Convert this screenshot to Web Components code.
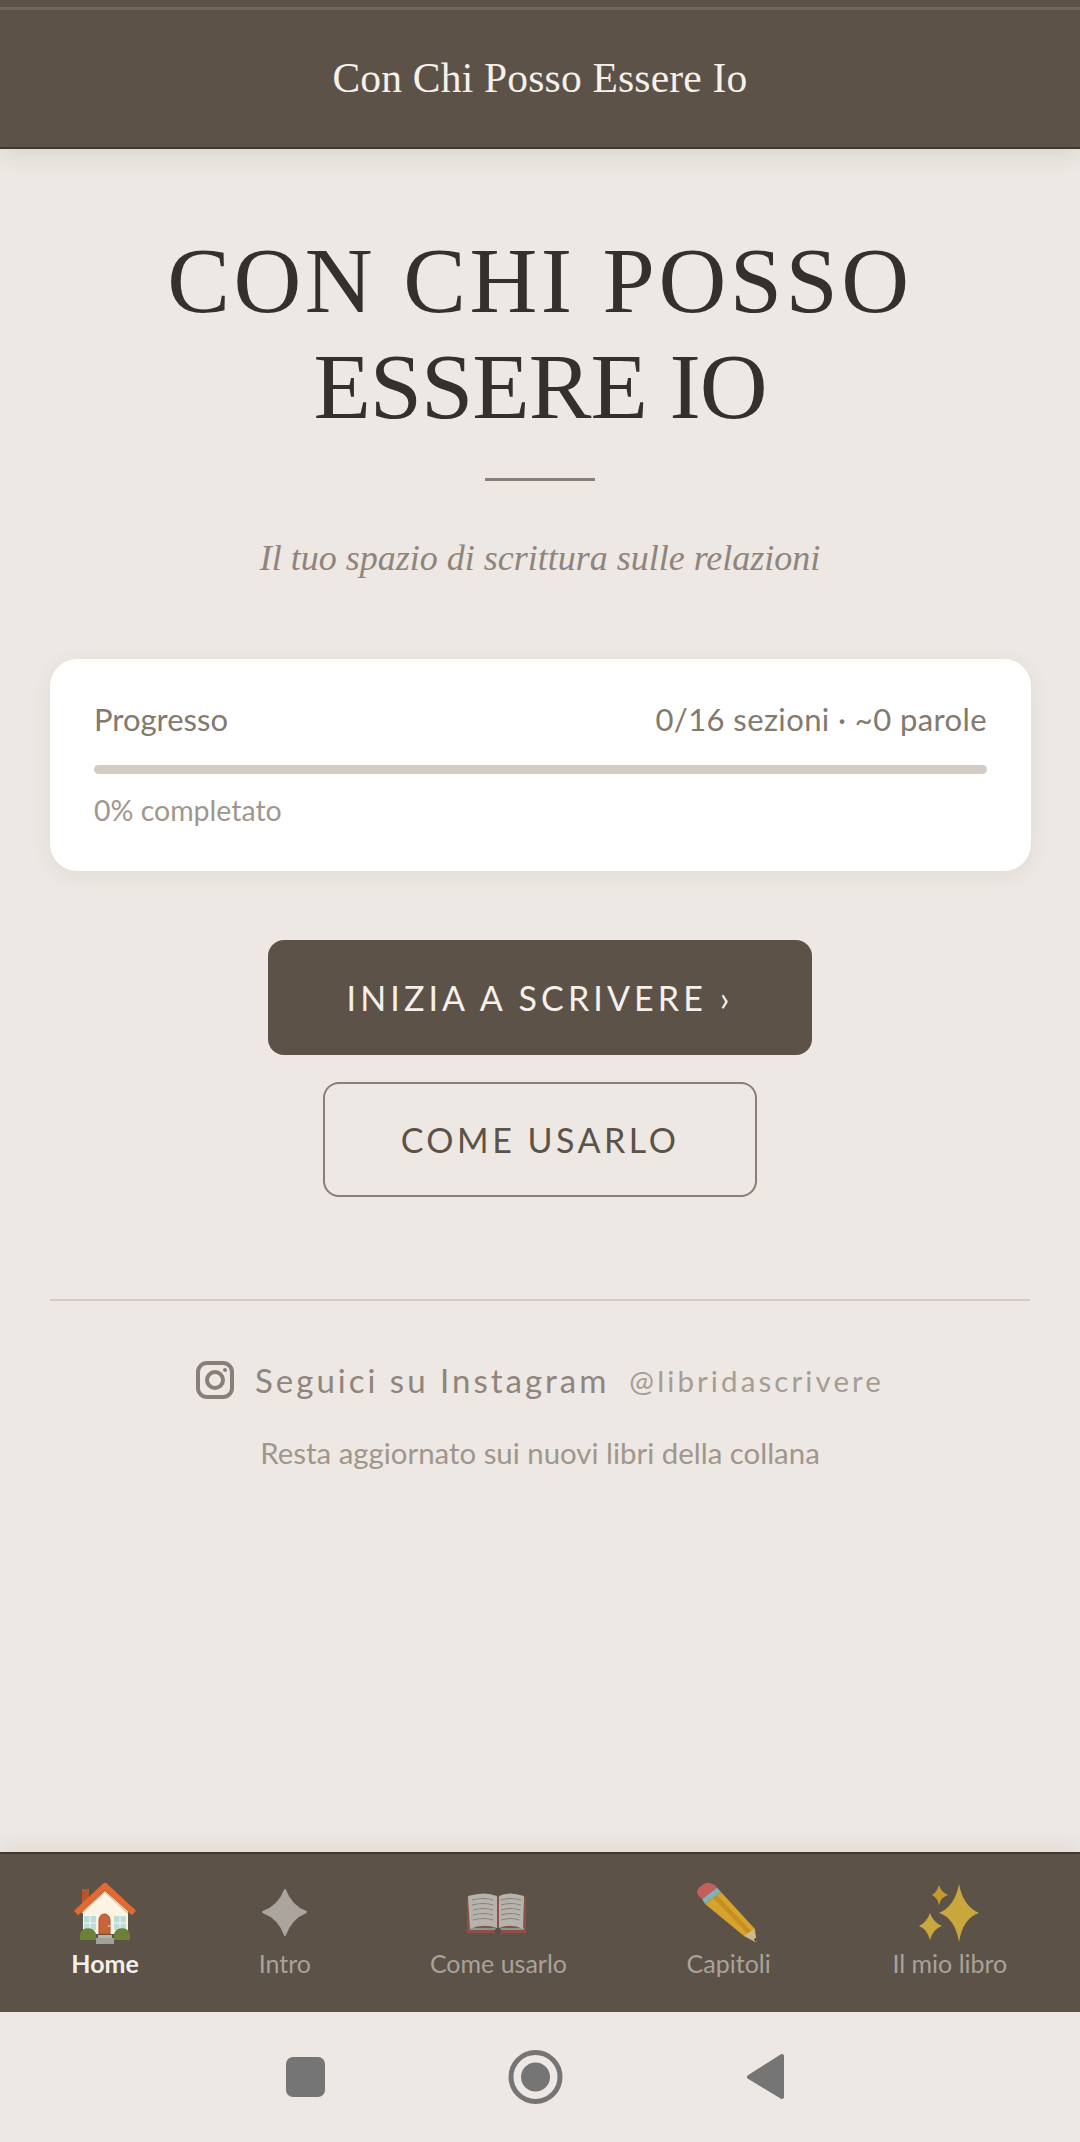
<html>
<head>
<style>
    html, body{
        margin: 0;
        padding: 0;
        background: #ede8e3;
    }
</style>
</head>
<body>
    <app-page>
        <app-header>Con Chi Posso Essere Io</app-header>
        <hero-title>
            <span slot="titolo" style="letter-spacing:3.500px">CON CHI POSSO</span>
            <span slot="titolo" style="letter-spacing:-1px;display:block">ESSERE IO</span>
            <span slot="sottotitolo">Il tuo spazio di scrittura sulle relazioni</span>
        </hero-title>
        <progress-card></progress-card>
        <action-button class="first" variant="solid">INIZIA A SCRIVERE ›</action-button>
        <action-button variant="outline">COME USARLO</action-button>
        <social-follow></social-follow>
        <bottom-nav slot="nav">
            <nav-item icon="home" active w="66">Home</nav-item>
            <nav-item icon="star" w="49">Intro</nav-item>
            <nav-item icon="book" w="134">Come usarlo</nav-item>
            <nav-item icon="pencil" w="82">Capitoli</nav-item>
            <nav-item icon="sparkles" w="116">Il mio libro</nav-item>
        </bottom-nav>
        <system-bar slot="nav"></system-bar>
    </app-page>
<script>
    const SANS = `Lato, "Open Sans", sans-serif`;
    const SERIF = `"Liberation Serif", serif`;

    const ICONS = {
        home: `
            <rect x="22" y="17" width="7" height="20" fill="#b5562c"/>
            <path d="M23 62V39L45 19l23 20v23z" fill="#fdf3e3"/>
            <path d="M16 41L45 14l29 27" fill="none" stroke="#e2692f" stroke-width="6" stroke-linejoin="round"/>
            <path d="M22 41L45 20l23 21" fill="none" stroke="#d9c4a8" stroke-width="1.500"/>
            <rect x="24" y="44" width="12" height="14" fill="#b9dcdc"/>
            <rect x="54" y="44" width="12" height="14" fill="#b9dcdc"/>
            <path d="M30 44v14M24 51h12M60 44v14M54 51h12" stroke="#fdf3e3" stroke-width="1"/>
            <path d="M39 62V48a5.500 6 0 0 1 11 0v14z" fill="#c8643a" stroke="#a34d2a" stroke-width="1"/>
            <circle cx="49" cy="54" r="1" fill="#f2d060"/>
            <path d="M20 68v-4a6 5 0 0 1 16-2v6zM54 68v-6a6 5 0 0 1 16 2v4z" fill="#6d8038"/>
            <rect x="38" y="63" width="14" height="3" fill="#b5b3ad"/>
            <rect x="36" y="66" width="18" height="6" fill="#a3a19b"/>`,
        star: `<path d="M45 18Q51 34 66 40Q51 46 45 63Q39 46 23 40Q39 34 45 18z" fill="#aba59d" stroke="#aba59d" stroke-width="2" stroke-linejoin="round"/>`,
        book: `
            <path d="M14 25V61H40L43 63H47L50 61H73V25z" fill="#8f4f45"/>
            <path d="M16 58H42L45 62L48 58H71V56H19z" fill="#7d9a96"/>
            <path d="M15 24Q32 19 44 24V56Q30 51 17 57z" fill="#b6b3ad"/>
            <path d="M71 24Q56 19 46 24V56Q58 51 70 57z" fill="#b6b3ad"/>
            <path d="M19 28q12-3 21 0M19 33q12-3 21 0M20 38q11-3 20 0M20 43q11-3 20 0M20 48q11-3 20 0M48 28q10-3 20 0M48 33q10-3 20 0M48 38q10-3 19 0M48 43q10-3 19 0M48 48q10-3 18 0" fill="none" stroke="#85817a" stroke-width="1.200"/>
            <path d="M41 60L43 56H47L49 60L45 64z" fill="#55504a"/>`,
        pencil: `
            <path d="M21 32L37 20L71 57L72 66L60 64z" fill="#d6a32c"/>
            <path d="M29 26L33 23L68 60L64 62z" fill="#c4901f"/>
            <path d="M60 64L70 57L73 71z" fill="#cdb98a"/>
            <path d="M70 67L73 73L72 66z" fill="#4a4540"/>
            <path d="M21 32L37 20L33 15.500L18 27z" fill="#85b0b4"/>
            <path d="M18 27L33 15.500Q28 10 22 11Q13 15 13 21Q14 24 18 27z" fill="#c4605c"/>`,
        sparkles: `
            <path d="M54 12Q58 34 74 41Q58 46 54 70Q50 46 34 41Q50 34 54 12z" fill="#c8a73c"/>
            <path d="M34 13Q36 20 43 23Q36 25 34 33Q32 25 27 23Q32 20 34 13z" fill="#c49a2a"/>
            <path d="M25 41Q28 50 37 54Q28 57 25 68Q22 57 14 54Q22 50 25 41z" fill="#c8a73c"/>`
    };

    class BaseElement extends HTMLElement{
        constructor(){
            super();
            this.attachShadow({mode: 'open'});
        }
        connectedCallback(){
            const template = document.createElement('template');
            template.innerHTML = `<style>${this.getStyles()}</style>${this.getMarkup()}`;
            this.shadowRoot.appendChild(template.content.cloneNode(true));
        }
    }

    class AppPage extends BaseElement{
        getStyles(){
            return `
            :host{ display: flex; flex-direction: column; height: 2142px; width: 1080px; background: #ede8e3; overflow: hidden; }
            main{ flex: 1; display: flex; flex-direction: column; align-items: stretch; padding: 0 50px; min-height: 0; }
            `;
        }
        getMarkup(){
            return `<main><slot></slot></main><slot name="nav"></slot>`;
        }
    }

    class AppHeader extends BaseElement{
        getStyles(){
            return `
            :host{ display: block; margin: 0 -50px; background: #5c5248; border-bottom: 2px solid #40392f; box-shadow: 0 4px 22px rgba(60,50,40,.12); color: #f5f0eb; height: 147px; }
            .strip{ height: 3px; position: relative; top: 7px; background: #6f665c; }
            h1{ margin: 0; padding-top: 50px; text-align: center; font: 400 41.500px/50px ${SERIF}; letter-spacing: .2px; }
            `;
        }
        getMarkup(){
            return `<div class="strip"></div><h1><slot></slot></h1>`;
        }
    }

    class HeroTitle extends BaseElement{
        getStyles(){
            return `
            :host{ display: flex; flex-direction: column; align-items: center; padding-top: 78px; text-align: center; }
            h2{ margin: 0; font: 400 94px/106px ${SERIF}; color: #33302d; }
            .rule{ width: 110px; height: 3px; margin-top: 39px; background: #8a7f76; }
            p{ margin: 54px 0 0; font: italic 400 36px/46px ${SERIF}; color: #8f857c; }
            `;
        }
        getMarkup(){
            return `<h2><slot name="titolo"></slot></h2><div class="rule"></div><p><slot name="sottotitolo"></slot></p>`;
        }
    }

    class ProgressCard extends BaseElement{
        getStyles(){
            return `
            :host{ display: block; margin: 78px -1px 0 0; height: 212px; box-sizing: border-box; padding: 42px 44px 0; background: #fff; border-radius: 27px; box-shadow: 0 4px 20px rgba(92,82,72,.08); font-family: ${SANS}; }
            .row{ display: flex; justify-content: space-between; font-size: 31px; line-height: 36px; color: #82796f; font-weight: 400; }
            .right{ letter-spacing: .4px; }
            .bar{ height: 9px; margin-top: 28px; border-radius: 5px; background: #d4ccc4; }
            .note{ margin-top: 19px; font-size: 28.500px; line-height: 34px; color: #9f978d; font-weight: 400; }
            `;
        }
        getMarkup(){
            return `
            <div class="row"><span>Progresso</span><span class="right">0/16 sezioni · ~0 parole</span></div>
            <div class="bar"></div>
            <div class="note">0% completato</div>`;
        }
    }

    class ActionButton extends BaseElement{
        getStyles(){
            return `
            :host{ display: block; align-self: center; margin-top: 27px; }
            :host(.first){ margin-top: 69px; }
            a{ display: flex; align-items: center; justify-content: center; box-sizing: border-box; height: 115px; border-radius: 16px; font: 400 34px/40px ${SANS}; }
            a.solid{ width: 544px; background: #5c5248; color: #f5f0eb; letter-spacing: 4.100px; }
            a.outline{ width: 434px; border: 2px solid #8a7f76; border-radius: 16px; color: #5c5248; letter-spacing: 3.500px; }
            `;
        }
        getMarkup(){
            return `<a class="${this.getAttribute('variant')}"><slot></slot></a>`;
        }
    }

    class SocialFollow extends BaseElement{
        getStyles(){
            return `
            :host{ display: block; margin-top: 102px; border-top: 2px solid #d4ccc4; padding-top: 60px; font-family: ${SANS}; text-align: center; }
            .line{ display: flex; align-items: center; justify-content: center; height: 38px; }
            svg{ width: 38px; height: 38px; margin-right: 21px; }
            .name{ font-size: 33px; letter-spacing: 3px; color: #8f857c; font-weight: 400; }
            .handle{ margin-left: 20px; font-size: 29.500px; letter-spacing: 3.100px; color: #a59d95; font-weight: 400; }
            p{ margin: 0; padding-top: 36px; font-size: 29.400px; line-height: 36px; color: #a0968c; font-weight: 400; }
            `;
        }
        getMarkup(){
            return `
            <div class="line">
                <svg viewBox="0 0 38 38"><rect x="2" y="2" width="34" height="34" rx="9" fill="none" stroke="#8a7f76" stroke-width="4"/><circle cx="19" cy="19" r="8" fill="none" stroke="#8a7f76" stroke-width="4"/><circle cx="29" cy="9" r="2" fill="#8a7f76"/></svg>
                <span class="name">Seguici su Instagram</span><span class="handle">@libridascrivere</span>
            </div>
            <p>Resta aggiornato sui nuovi libri della collana</p>`;
        }
    }

    class BottomNav extends BaseElement{
        getStyles(){
            return `
            :host{ display: flex; justify-content: space-around; height: 158px; padding: 0 11px; background: #5c5248; border-top: 2px solid #40392f; box-shadow: 0 -4px 20px rgba(60,50,40,.08); }
            `;
        }
        getMarkup(){
            return `<slot></slot>`;
        }
    }

    class NavItem extends BaseElement{
        getStyles(){
            return `
            :host{ display: flex; flex-direction: column; align-items: center; padding-top: 18px; font: 400 25px/30px ${SANS}; color: #aaa299; white-space: nowrap; }
            :host([active]){ color: #f5f0eb; font-weight: 700; }
            svg{ display: block; width: 90px; height: 80px; flex: none; }
            span{ margin-top: -4px; }
            `;
        }
        getMarkup(){
            this.style.width = this.getAttribute('w') + 'px';
            return `<svg viewBox="0 0 90 80">${ICONS[this.getAttribute('icon')]}</svg><span><slot></slot></span>`;
        }
    }

    class SystemBar extends BaseElement{
        getStyles(){
            return `
            :host{ display: flex; align-items: center; justify-content: center; height: 130px; background: #ede8e3; }
            svg{ display: block; width: 510px; height: 60px; }
            `;
        }
        getMarkup(){
            return `
            <svg viewBox="285 2047 510 60" fill="#757575">
                <rect x="286" y="2057" width="39" height="40" rx="7"/>
                <circle cx="535.500" cy="2077" r="24.500" fill="none" stroke="#757575" stroke-width="5"/>
                <circle cx="535.500" cy="2077" r="14.500"/>
                <path d="M782 2056V2097L749 2077z" stroke="#757575" stroke-width="4" stroke-linejoin="round"/>
            </svg>`;
        }
    }

    customElements.define('app-page', AppPage);
    customElements.define('app-header', AppHeader);
    customElements.define('hero-title', HeroTitle);
    customElements.define('progress-card', ProgressCard);
    customElements.define('action-button', ActionButton);
    customElements.define('social-follow', SocialFollow);
    customElements.define('bottom-nav', BottomNav);
    customElements.define('nav-item', NavItem);
    customElements.define('system-bar', SystemBar);
</script>
</body>
</html>
